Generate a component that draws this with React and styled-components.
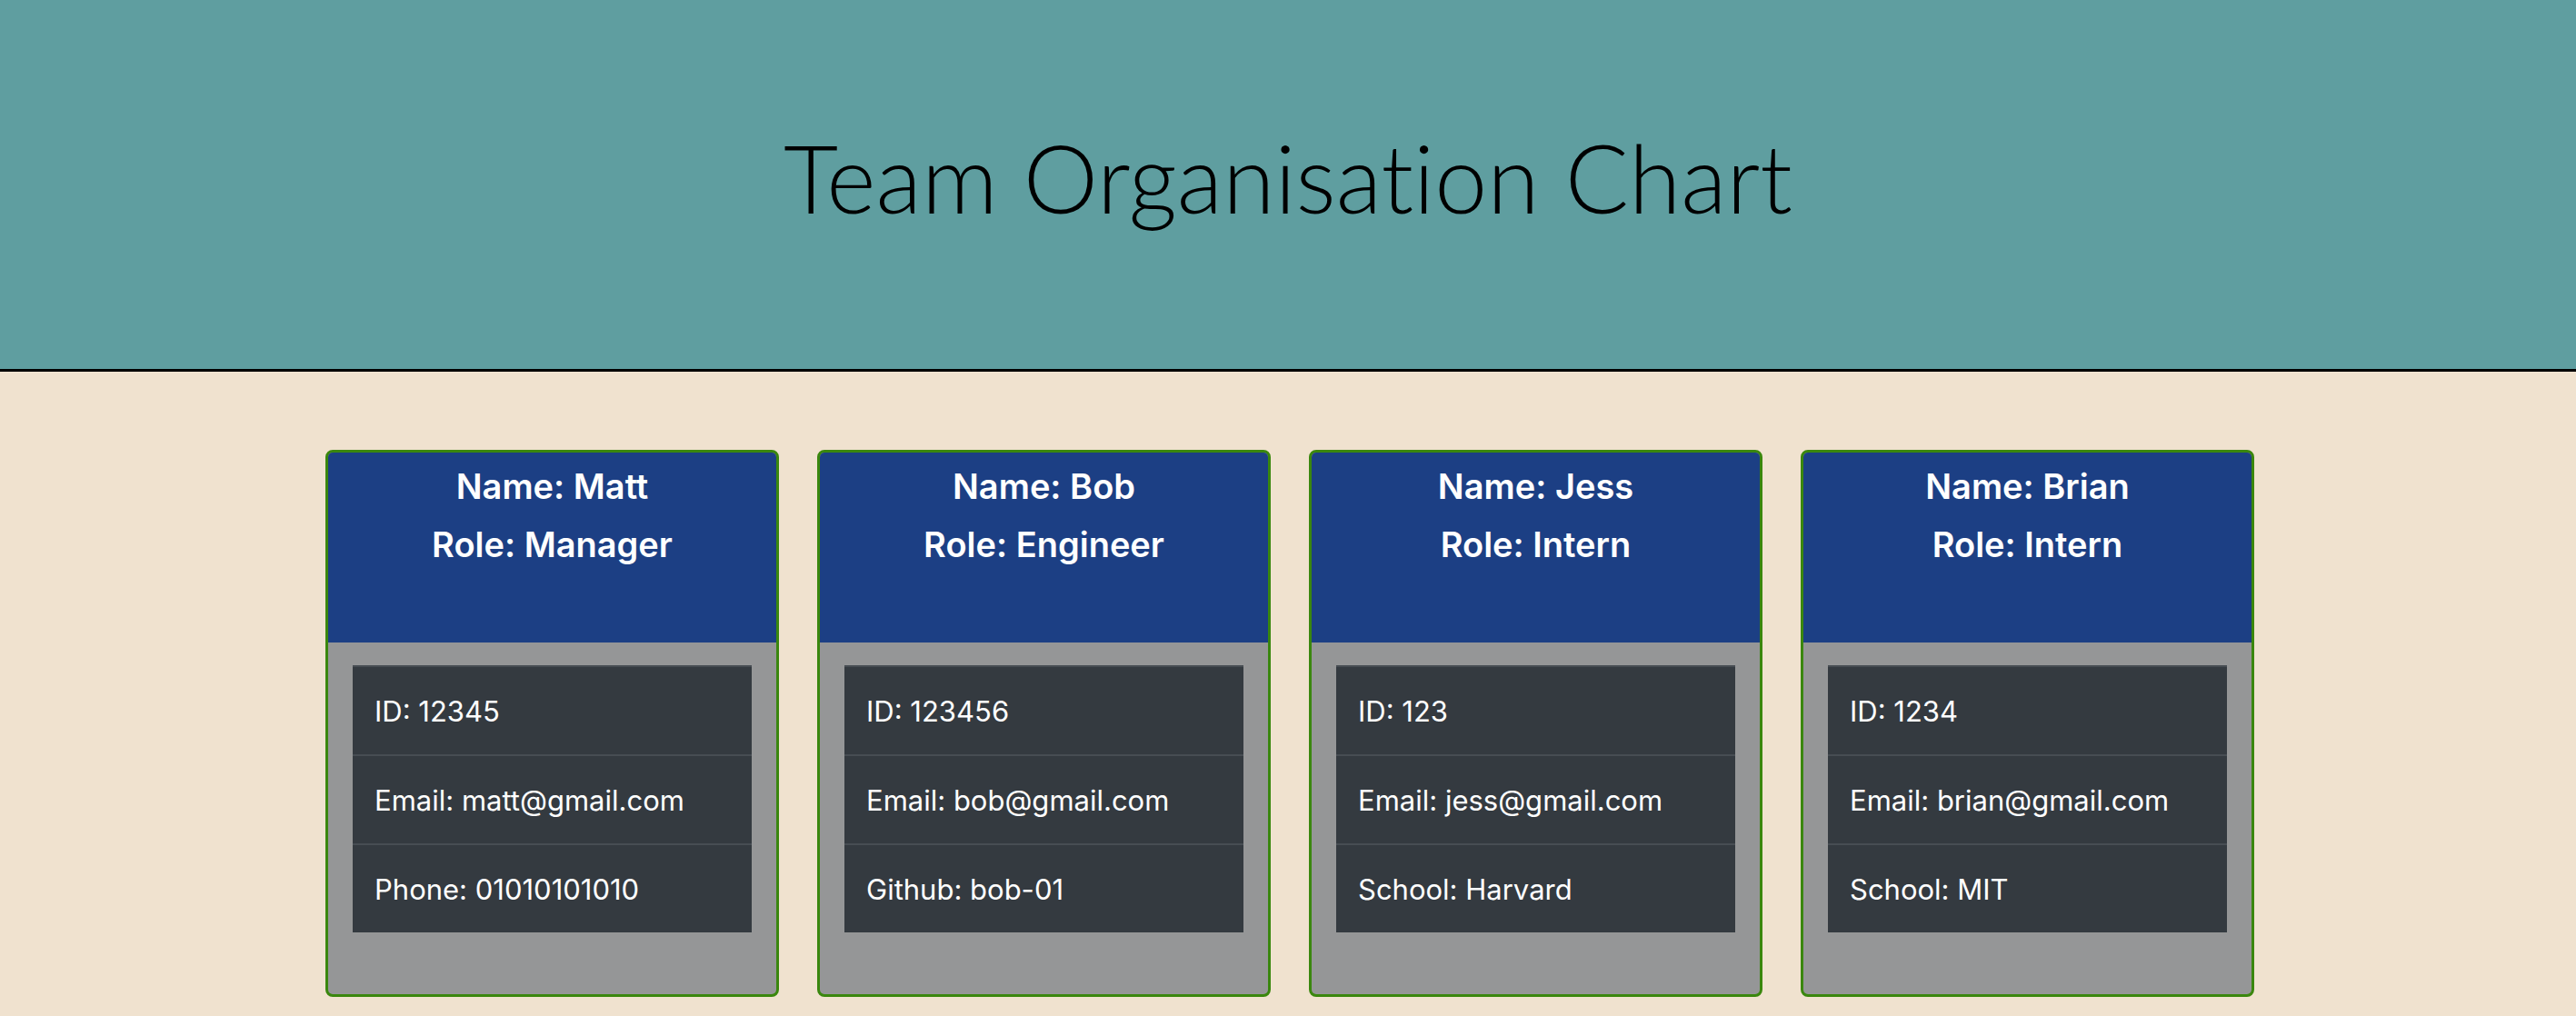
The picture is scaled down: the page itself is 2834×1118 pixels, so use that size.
import React from 'react';
import styled, { createGlobalStyle } from 'styled-components';

const colors = {
  teal: '#5f9ea0',
  beige: '#f0e2cf',
  green: '#3a870e',
  blue: '#1c3f84',
  gray: '#959697',
  dark: '#343a40',
  divider: '#474d53',
};

const team = [
  { name: 'Matt', role: 'Manager', id: '12345', email: 'matt@gmail.com', extra: 'Phone: 01010101010' },
  { name: 'Bob', role: 'Engineer', id: '123456', email: 'bob@gmail.com', extra: 'Github: bob-01' },
  { name: 'Jess', role: 'Intern', id: '123', email: 'jess@gmail.com', extra: 'School: Harvard' },
  { name: 'Brian', role: 'Intern', id: '1234', email: 'brian@gmail.com', extra: 'School: MIT' },
];

const GlobalStyle = createGlobalStyle`
  html, body {
    margin: 0;
    padding: 0;
    background: ${colors.beige};
    font-family: Inter, "Noto Sans", "Liberation Sans", sans-serif;
  }
  * { box-sizing: border-box; }
`;

const Banner = styled.header`
  height: 409px;
  background: ${colors.teal};
  border-bottom: 3px solid #000;
  display: flex;
  align-items: center;
  justify-content: center;
  padding-bottom: 16px;
`;

const Title = styled.h1`
  margin: 0;
  font-family: Lato, "Open Sans", sans-serif;
  font-weight: 300;
  font-size: 104px;
  line-height: 1.2;
  font-variant-ligatures: none;
  color: #000;
`;

const CardRow = styled.main`
  display: flex;
  justify-content: center;
  gap: 42px;
  padding-top: 86px;
  padding-left: 4px;
`;

const Card = styled.section`
  width: 499px;
  height: 602px;
  border: 3px solid ${colors.green};
  border-radius: 8px;
  overflow: hidden;
  background: ${colors.gray};
  display: flex;
  flex-direction: column;
`;

const CardHeader = styled.div`
  height: 209px;
  background: ${colors.blue};
  color: #fff;
  text-align: center;
  padding-top: 13px;
`;

const HeaderLine = styled.h5`
  margin: 0 0 16px;
  font-size: 38px;
  font-weight: 600;
  line-height: 48px;
`;

const CardBody = styled.div`
  padding: 25px 27px;
`;

const List = styled.ul`
  list-style: none;
  margin: 0;
  padding: 0;
  background: ${colors.dark};
  border-top: 2px solid ${colors.divider};
`;

const Item = styled.li`
  color: #fff;
  font-size: 31px;
  line-height: 48px;
  padding: 25px 24px 23px;
  border-bottom: ${p => (p.$last ? 'none' : `2px solid ${colors.divider}`)};
`;

const MemberCard = ({ member }) => (
  <Card>
    <CardHeader>
      <HeaderLine>Name: {member.name}</HeaderLine>
      <HeaderLine>Role: {member.role}</HeaderLine>
    </CardHeader>
    <CardBody>
      <List>
        <Item>ID: {member.id}</Item>
        <Item>Email: {member.email}</Item>
        <Item $last>{member.extra}</Item>
      </List>
    </CardBody>
  </Card>
);

export default function App() {
  return (
    <>
      <GlobalStyle />
      <Banner>
        <Title>Team Organisation Chart</Title>
      </Banner>
      <CardRow>
        {team.map(m => (
          <MemberCard key={m.name} member={m} />
        ))}
      </CardRow>
    </>
  );
}
